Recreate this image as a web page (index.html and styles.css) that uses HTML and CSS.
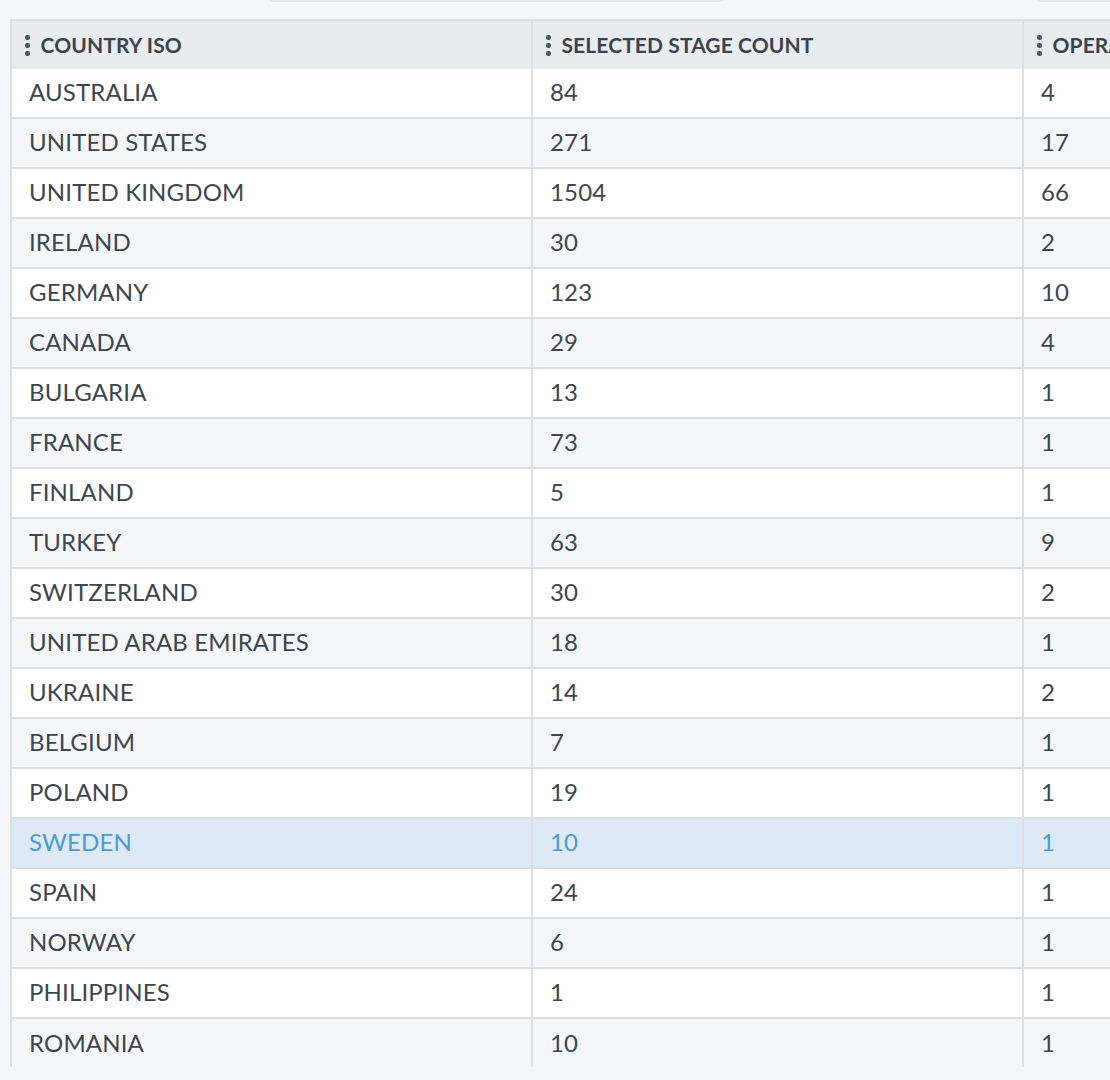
FILE: index.html
```html
<!DOCTYPE html>
<html>
<head>
<meta charset="utf-8">
<link rel="stylesheet" href="styles.css">
</head>
<body>
<div class="toolbar">
  <div class="field field-a"></div>
  <div class="field field-b"></div>
</div>
<div class="table-wrap">
  <table class="grid">
    <thead>
      <tr>
        <th class="c1"><span class="hd"><span class="dots"><i></i><i></i><i></i></span>COUNTRY ISO</span></th>
        <th class="c2"><span class="hd"><span class="dots"><i></i><i></i><i></i></span>SELECTED STAGE COUNT</span></th>
        <th class="c3"><span class="hd"><span class="dots"><i></i><i></i><i></i></span>OPERATOR COUNT</span></th>
      </tr>
    </thead>
    <tbody>
      <tr><td>AUSTRALIA</td><td>84</td><td>4</td></tr>
      <tr><td>UNITED STATES</td><td>271</td><td>17</td></tr>
      <tr><td>UNITED KINGDOM</td><td>1504</td><td>66</td></tr>
      <tr><td>IRELAND</td><td>30</td><td>2</td></tr>
      <tr><td>GERMANY</td><td>123</td><td>10</td></tr>
      <tr><td>CANADA</td><td>29</td><td>4</td></tr>
      <tr><td>BULGARIA</td><td>13</td><td>1</td></tr>
      <tr><td>FRANCE</td><td>73</td><td>1</td></tr>
      <tr><td>FINLAND</td><td>5</td><td>1</td></tr>
      <tr><td>TURKEY</td><td>63</td><td>9</td></tr>
      <tr><td>SWITZERLAND</td><td>30</td><td>2</td></tr>
      <tr><td>UNITED ARAB EMIRATES</td><td>18</td><td>1</td></tr>
      <tr><td>UKRAINE</td><td>14</td><td>2</td></tr>
      <tr><td>BELGIUM</td><td>7</td><td>1</td></tr>
      <tr><td>POLAND</td><td>19</td><td>1</td></tr>
      <tr class="selected"><td>SWEDEN</td><td>10</td><td>1</td></tr>
      <tr><td>SPAIN</td><td>24</td><td>1</td></tr>
      <tr><td>NORWAY</td><td>6</td><td>1</td></tr>
      <tr><td>PHILIPPINES</td><td>1</td><td>1</td></tr>
      <tr class="last"><td>ROMANIA</td><td>10</td><td>1</td></tr>
    </tbody>
  </table>
</div>
</body>
</html>
```

FILE: styles.css
```css
html, body {
  margin: 0;
  padding: 0;
  background: #f5f6fa;
  overflow: hidden;
}

body {
  width: 1110px;
  height: 1080px;
  font-family: Lato, "Open Sans", sans-serif;
  color: #3c4650;
}

.toolbar {
  height: 19px;
  display: flex;
  align-items: flex-end;
  overflow: hidden;
}

.field {
  height: 30px;
  margin-bottom: 17px;
  border: 2px solid #e1e4e8;
  border-radius: 6px;
  background: #f8f9fb;
  box-sizing: border-box;
  flex: none;
}

.field-a {
  margin-left: 268px;
  width: 458px;
}

.field-b {
  margin-left: 309px;
  width: 200px;
}

.table-wrap {
  margin-left: 10px;
  width: 1100px;
  overflow: hidden;
}

.grid {
  border-collapse: separate;
  border-spacing: 0;
  border-left: 2px solid #dcdfe3;
  border-top: 2px solid #dcdfe3;
  width: 1300px;
  table-layout: fixed;
}

.grid th,
.grid td {
  height: 48px;
  padding: 0 0 0 17px;
  text-align: left;
  white-space: nowrap;
  box-sizing: border-box;
  border-right: 2px solid #dcdfe3;
  border-bottom: 2px solid #dcdfe3;
  vertical-align: middle;
}

.grid td {
  font-size: 24px;
  height: 50px;
  padding-bottom: 3px;
  letter-spacing: 0.15px;
  font-weight: 400;
}

.grid th {
  height: 48px;
  border-bottom: none;
  background: #e9ecef;
  font-size: 21px;
  font-weight: 700;
  color: #3b444d;
  padding-left: 13px;
  padding-bottom: 1px;
  letter-spacing: 0.1px;
}

.grid .c1 { width: 521px; }
.grid .c2 { width: 491px; }
.grid .c3 { width: 288px; }

.grid tbody tr:nth-child(odd) td { background: #ffffff; }
.grid tbody tr:nth-child(even) td { background: #f5f6fa; }

.grid tbody tr.selected td {
  background: #dde9f5;
  color: #4b9ad6;
}

.grid tbody tr.last td {
  border-bottom: none;
  height: 48px;
  padding-bottom: 1px;
}

.hd {
  display: flex;
  align-items: center;
}

.dots {
  display: flex;
  flex-direction: column;
  gap: 3.5px;
  margin-right: 11px;
  margin-top: 2px;
}

.dots i {
  display: block;
  width: 4.5px;
  height: 4.5px;
  border-radius: 50%;
  background: #4a545e;
}
```
